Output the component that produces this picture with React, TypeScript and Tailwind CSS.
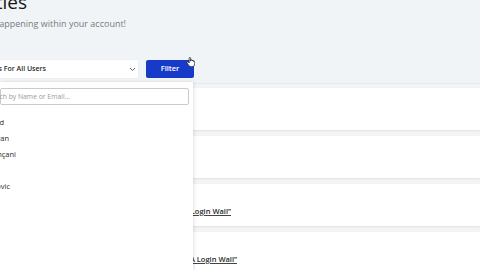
import React from "react";

function Crop({ end, className, children }: { end: number; className?: string; children: React.ReactNode }) {
  return (
    <div className={"flex justify-end " + (className ?? "")} style={{ width: end }}>
      <span className="whitespace-nowrap shrink-0">{children}</span>
    </div>
  );
}

function Hand() {
  return (
    <svg width="9" height="10" viewBox="0 0 20 22" className="absolute left-[186px] top-[57px]">
      <path
        d="M7 2.5c0-1 .7-1.7 1.6-1.7s1.6.7 1.6 1.7V9l.3-.1V7.3c0-.9.7-1.5 1.5-1.5s1.5.6 1.5 1.5v1.5c0-.9.7-1.5 1.5-1.5s1.5.6 1.5 1.5v1.2c0-.8.6-1.4 1.4-1.4s1.4.6 1.4 1.4v5.3c0 3.4-2.6 6.2-6 6.2h-2.2c-2 0-3.6-1-4.7-2.6L2.2 13c-.5-.8-.3-1.8.5-2.3.7-.4 1.6-.3 2.1.3L7 13.2V2.5z"
        fill="#ffffff"
        stroke="#1a1a1a"
        strokeWidth="1.6"
        strokeLinejoin="round"
      />
    </svg>
  );
}

const names: { end: number; name: string }[] = [
  { end: 4, name: "Sara Ahmed" },
  { end: 9, name: "Kevin Ryan" },
  { end: 16, name: "Ilir Gonçani" },
  { end: 0, name: "Li Na" },
  { end: 10, name: "Marko Jovanovic" },
];

const cards: { end: number; text: string }[] = [
  { end: 150, text: "Visited \u201cHome Page\u201d" },
  { end: 140, text: "Visited \u201cPricing\u201d" },
  { end: 231, text: "Visited \u201cMembers Login Wall\u201d" },
  { end: 237, text: "Visited \u201cPremium A Login Wall\u201d" },
];

export default function App() {
  return (
    <div
      className="relative w-[480px] h-[270px] overflow-hidden bg-[#f1f4f7] text-[#2b2b2b]"
      style={{ fontFamily: '"Open Sans", "Noto Sans", sans-serif' }}
    >
      <div className="flex flex-col">
        <Crop end={27} className="mt-[-7px] h-[18px] text-[19px] leading-[18px] text-[#161616]">
          Activities
        </Crop>
        <Crop end={126} className="mt-[7px] h-[12px] text-[9px] leading-[12px] text-[#777b80]">
          What&apos;s happening within your account!
        </Crop>

        <div className="mt-[30px] flex items-center h-[18px]">
          <div className="w-[138px] h-[18px] bg-white flex items-center justify-between pr-[2px] shadow-[0_0_0_1px_#eceef1]">
            <Crop end={46} className="text-[7px] font-semibold text-[#2a2a2a] leading-[18px]">
              Activities For All Users
            </Crop>
            <svg width="7" height="5" viewBox="0 0 7 5">
              <path d="M1 1l2.5 2.5L6 1" fill="none" stroke="#666" strokeWidth="1" />
            </svg>
          </div>
          <div className="ml-[8px] w-[48px] h-[18px] rounded-[2px] bg-[#173bc8] text-white text-[7.5px] font-semibold flex items-center justify-center">
            Filter
          </div>
        </div>

        <div className="mt-[5px] border-t border-[#e6e8eb] bg-[#f3f4f5] pt-[4px] flex flex-col gap-[6px]">
          {cards.map((c, i) => (
            <div key={i} className="h-[42px] bg-white shadow-[0_1px_2px_rgba(0,0,0,0.08)] flex flex-col justify-end pb-[10px]">
              <Crop end={c.end} className="text-[7.5px] font-semibold leading-[10px] text-[#2a2a2a]">
                <span className="underline decoration-[#444]">{c.text}</span>
              </Crop>
            </div>
          ))}
        </div>
      </div>

      <div className="absolute left-0 top-[82px] w-[193px] h-[200px] bg-white shadow-[1px_0_3px_rgba(0,0,0,0.12)] flex flex-col">
        <div className="mt-[6px] mr-[4px] h-[17px] border border-[#c8cacd] rounded-[2px] flex items-center">
          <Crop end={69} className="text-[6.8px] text-[#9a9a9a] leading-[15px]">
            Search by Name or Email...
          </Crop>
        </div>
        <div className="mt-[9px] flex flex-col">
          {names.map((n, i) => (
            <Crop key={i} end={n.end} className="h-[16px] text-[7.5px] leading-[16px] text-[#2a2a2a]">
              {n.name}
            </Crop>
          ))}
        </div>
      </div>

      <Hand />
    </div>
  );
}
